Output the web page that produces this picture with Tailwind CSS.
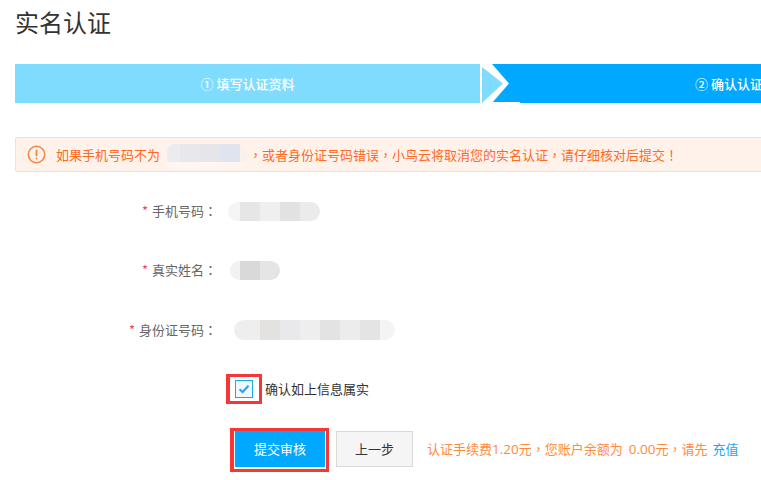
<!DOCTYPE html>
<html lang="zh">
<head>
<meta charset="utf-8">
<script src="https://cdn.jsdelivr.net/npm/@tailwindcss/browser@4"></script>
</head>
<body class="bg-white overflow-hidden font-['Noto_Sans_CJK_SC','Noto_Sans',sans-serif]">
<div class="w-[761px] h-[480px] overflow-hidden pl-[15px]">
  <h1 class="h-[64px] pt-[5px] text-[24px] leading-[34px] font-normal text-[#333]">实名认证</h1>

  <div class="relative flex w-[1000px] h-[39px] text-[13px] leading-[39px] font-medium text-white">
    <div class="w-[465px] bg-[#80dcff] text-center">① 填写认证资料</div>
    <div class="ml-[2px] w-[520px] bg-[#00a9ff] text-center">② 确认认证信息</div>
    <svg class="absolute left-[465px] top-0" width="40" height="39" viewBox="0 0 40 39">
      <polygon points="0,0 12,0 29,19.5 12,39 0,39" fill="#fff"/>
      <polygon points="2,3 23,19.5 2,39" fill="#80dcff"/>
      <rect x="12" y="38" width="28" height="1" fill="#fff"/>
    </svg>
  </div>

  <div class="mt-[34px] flex items-center w-[800px] h-[35px] rounded-[2px] border border-[#fbdccb] bg-[#fff2ea] pl-[11px] text-[13px] text-[#ff6a1f] whitespace-nowrap">
    <svg width="19" height="19" viewBox="0 0 19 19" class="shrink-0">
      <circle cx="9.5" cy="9.5" r="8.2" fill="none" stroke="#f58443" stroke-width="1.5"/>
      <rect x="8.6" y="4.5" width="1.8" height="6.8" rx="0.9" fill="#f58443"/>
      <rect x="8.6" y="12.6" width="1.8" height="1.9" rx="0.9" fill="#f58443"/>
    </svg>
    <span class="ml-[10px]">如果手机号码不为</span>
    <span class="ml-[7px] flex flex-col w-[80px] h-[25px] mt-[4px] rounded-[8px] overflow-hidden">
      <span class="flex h-[18px]"><span class="w-[13px] bg-[#ececf0]"></span><span class="w-[20px] bg-[#e7e7ec]"></span><span class="w-[20px] bg-[#e6e6ea]"></span><span class="w-[20px] bg-[#dfe4ee]"></span><span class="w-[7px] bg-[#fbf0ea]"></span></span>
      <span class="h-[7px] bg-[#fff6f1]"></span>
    </span>
    <span lang="zh-TW" class="ml-[2px] font-['Noto_Sans_CJK_TC',sans-serif]">，</span><span>或者身份证号码错误</span><span lang="zh-TW" class="font-['Noto_Sans_CJK_TC',sans-serif]">，</span><span>小鸟云将取消您的实名认证</span><span lang="zh-TW" class="font-['Noto_Sans_CJK_TC',sans-serif]">，</span><span>请仔细核对后提交</span><span lang="zh-TW" class="font-['Noto_Sans_CJK_TC',sans-serif]">！</span>
  </div>

  <div class="mt-[29px] flex items-center h-[20px] text-[13px] text-[#666]">
    <div class="w-[202px] text-right"><span class="text-[#f0445a] mr-[4px]">*</span>手机号码<span lang="zh-TW" class="font-['Noto_Sans_CJK_TC',sans-serif]">：</span></div>
    <div class="ml-[11px] flex w-[92px] h-[19px] rounded-full overflow-hidden">
      <span class="w-[12px] bg-[#f5f5f3]"></span><span class="w-[20px] bg-[#e6e6e6]"></span><span class="w-[20px] bg-[#efefef]"></span><span class="w-[20px] bg-[#e2e2e2]"></span><span class="w-[20px] bg-[#ebebeb]"></span>
    </div>
  </div>

  <div class="mt-[39px] flex items-center h-[20px] text-[13px] text-[#666]">
    <div class="w-[202px] text-right"><span class="text-[#f0445a] mr-[4px]">*</span>真实姓名<span lang="zh-TW" class="font-['Noto_Sans_CJK_TC',sans-serif]">：</span></div>
    <div class="ml-[13px] flex w-[50px] h-[19px] rounded-full overflow-hidden">
      <span class="w-[10px] bg-[#f2f2f2]"></span><span class="w-[20px] bg-[#d9d9d9]"></span><span class="w-[20px] bg-[#e5e5e5]"></span>
    </div>
  </div>

  <div class="mt-[40px] flex items-center h-[20px] text-[13px] text-[#666]">
    <div class="w-[202px] text-right"><span class="text-[#f0445a] mr-[4px]">*</span>身份证号码<span lang="zh-TW" class="font-['Noto_Sans_CJK_TC',sans-serif]">：</span></div>
    <div class="ml-[17px] flex w-[161px] h-[20px] rounded-full overflow-hidden">
      <span class="w-[26px] bg-[#eeeeee]"></span><span class="w-[20px] bg-[#e3e2e0]"></span><span class="w-[20px] bg-[#e9e9eb]"></span><span class="w-[20px] bg-[#eeeeee]"></span><span class="w-[20px] bg-[#e3e3e3]"></span><span class="w-[20px] bg-[#ececec]"></span><span class="w-[20px] bg-[#e3e4e3]"></span><span class="w-[15px] bg-[#f4f4f4]"></span>
    </div>
  </div>

  <div class="mt-[34px] ml-[211px] flex items-center h-[30px]">
    <div class="flex items-center justify-start pl-[5px] w-[36px] h-[30px] border-[3px] border-l-[4px] border-[#f73636] bg-white">
      <span class="flex items-center justify-center w-[18px] h-[18px] border border-[#19a9f5] bg-[#eef8fe]">
        <svg width="12" height="10" viewBox="0 0 12 10"><path d="M1.5 5.2 L4.6 8 L10.5 1.8" fill="none" stroke="#2f9fe8" stroke-width="2"/></svg>
      </span>
    </div>
    <span class="ml-[3px] text-[13px] text-[#333]">确认如上信息属实</span>
  </div>

  <div class="mt-[24px] ml-[215px] flex items-start">
    <div class="w-[99px] h-[44px] border-[3px] border-l-[4px] border-[#f73636] bg-white pl-[1px]">
      <button class="block w-[90px] h-[36px] bg-[#00a9ff] text-white text-[13px] leading-[36px] text-center">提交审核</button>
    </div>
    <div class="mt-[3px] ml-[7px] w-[77px] h-[36px] border border-[#d9d9d9] bg-[#f5f5f5] text-[13px] leading-[34px] text-center text-[#333]">上一步</div>
    <div class="mt-[3px] ml-[14px] text-[13px] leading-[36px] text-[#ff8a3c] whitespace-nowrap">认证手续费<span class="font-['Open_Sans',sans-serif] text-[13.5px]">1.20</span>元<span lang="zh-TW" class="font-['Noto_Sans_CJK_TC',sans-serif]">，</span>您账户余额为<span class="ml-[6px] font-['Open_Sans',sans-serif] text-[13.5px]">0.00</span>元<span lang="zh-TW" class="font-['Noto_Sans_CJK_TC',sans-serif]">，</span>请先<span class="ml-[5px] text-[#18a6ff]">充值</span></div>
  </div>
</div>
</body>
</html>
